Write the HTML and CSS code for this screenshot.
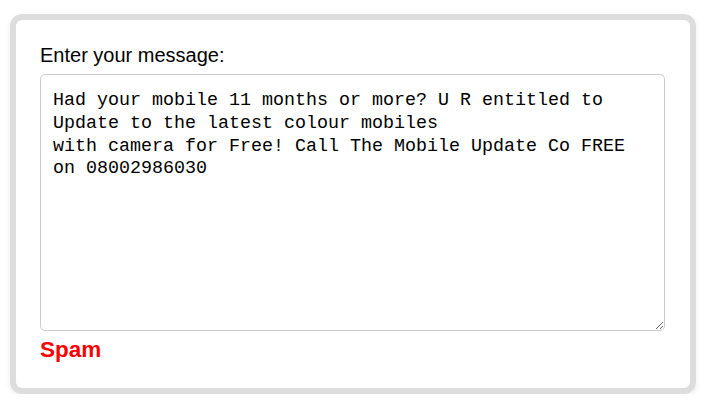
FILE: index.html
```html
<!DOCTYPE html>
<html>
<head>
<meta charset="utf-8">
<link rel="stylesheet" href="styles.css">
</head>
<body>
<div class="card">
  <label class="label" for="msg">Enter your message:</label>
  <textarea id="msg" class="message">Had your mobile 11 months or more? U R entitled to
Update to the latest colour mobiles
with camera for Free! Call The Mobile Update Co FREE
on 08002986030</textarea>
  <div class="result">Spam</div>
</div>
</body>
</html>
```
FILE: styles.css
```css
html, body {
  margin: 0;
  padding: 0;
  background: #ffffff;
}
body {
  padding: 14px 0 0 10px;
  font-family: "Liberation Sans", Arial, sans-serif;
}
.card {
  box-sizing: border-box;
  width: 686px;
  height: 380px;
  border: 6px solid #dddddd;
  border-radius: 12px;
  box-shadow: 0 2px 6px rgba(0,0,0,0.08);
  padding: 24px 24px 0 24px;
  display: flex;
  flex-direction: column;
}
.label {
  display: block;
  font-size: 20px;
  line-height: 23px;
  color: #000;
  margin: 0 0 7px 0;
}
.message {
  box-sizing: border-box;
  width: 625px;
  height: 257px;
  flex: none;
  border: 1px solid #cccccc;
  border-radius: 5px;
  padding: 15px 12px 8px 12px;
  font-family: "Liberation Mono", monospace;
  font-size: 18.33px;
  line-height: 22.8px;
  color: #000;
  resize: both;
  margin: 0;
  white-space: pre;
  overflow: hidden;
}
.result {
  color: #ff0000;
  font-weight: bold;
  font-size: 22.5px;
  line-height: 26px;
  margin-top: 6px;
}
```
